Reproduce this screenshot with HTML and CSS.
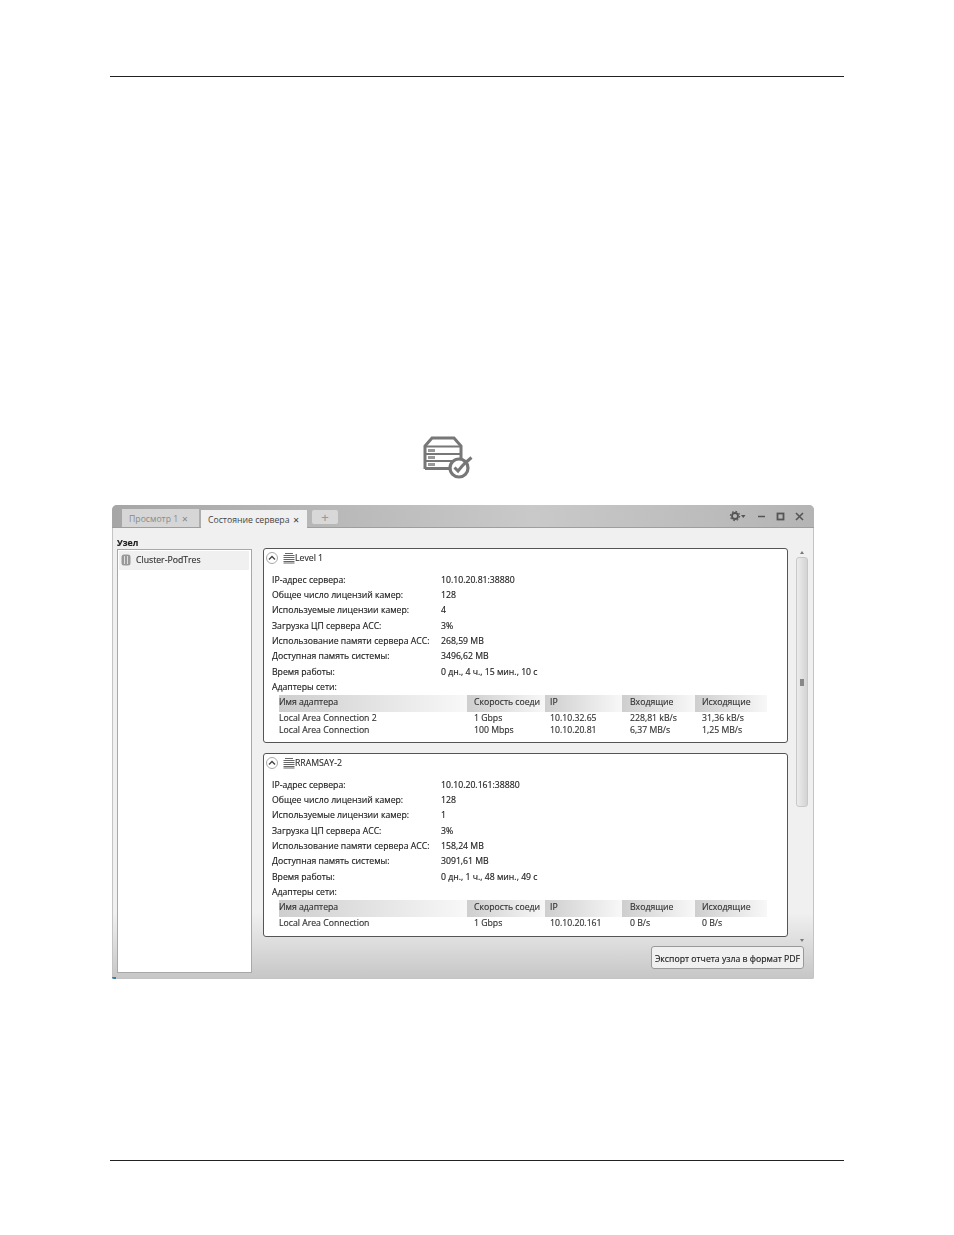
FILE: index.html
```html
<!DOCTYPE html>
<html lang="ru">
<head>
    <meta charset="UTF-8">
    <title>Состояние сервера</title>
    <link rel="stylesheet" href="styles.css">
</head>
<body>
<div class="page">
    <div class="rule"></div>

    <svg class="server-icon" width="52" height="44" viewBox="0 0 52 44">
        <path d="M2 34 V11 L9 3 H31 L38 11 V24" fill="none" stroke="#777" stroke-width="3" />
        <path d="M2 33.5 H26" stroke="#777" stroke-width="3" />
        <path d="M2 11.5 H38 M2 19 H38 M2 26 H30" stroke="#777" stroke-width="2.2" />
        <path d="M5 14h7v3H5zM5 21h7v3H5zM5 28h7v3H5z" fill="#999" />
        <circle cx="36" cy="33" r="9" fill="#fff" stroke="#777" stroke-width="3.2" />
        <path d="M31.5 32.5l3.5 3.5 5.5-6.5 M40.5 29.5l8-7" fill="none" stroke="#777" stroke-width="3" />
    </svg>

    <div class="window">
        <div class="titlebar">
            <div class="tab">Просмотр 1 <span class="tab-x">✕</span></div>
            <div class="tab tab-active">Состояние сервера <span class="tab-x">✕</span></div>
            <div class="tab-add">+</div>
            <div class="win-controls">
                <svg width="18" height="12" viewBox="0 0 18 12">
                    <circle cx="6" cy="6" r="3" fill="none" stroke="#555" stroke-width="1.8" />
                    <circle cx="6" cy="6" r="4.6" fill="none" stroke="#555" stroke-width="1.2" stroke-dasharray="1.6 2" />
                    <path d="M12 5h4.5l-2.2 3z" fill="#555" />
                </svg>
                <svg width="9" height="9" viewBox="0 0 9 9"><path d="M1 4.5h7" stroke="#555" stroke-width="1.6" /></svg>
                <svg width="9" height="9" viewBox="0 0 9 9"><rect x="1.5" y="1.5" width="6" height="6" fill="none" stroke="#555" stroke-width="1.8" /></svg>
                <svg width="9" height="9" viewBox="0 0 9 9"><path d="M1 1l7 7M8 1l-7 7" stroke="#555" stroke-width="1.6" /></svg>
            </div>
        </div>

        <div class="main">
            <div class="side">
                <div class="side-label">Узел</div>
                <div class="side-list">
                    <div class="side-item">
                        <svg width="10" height="12" viewBox="0 0 10 12">
                            <rect x="0.5" y="0.5" width="9" height="11" rx="2.5" fill="#999" />
                            <path d="M3.5 2v8M6.5 2v8" stroke="#ddd" />
                        </svg>
                        Cluster-PodTres
                    </div>
                </div>
            </div>

            <div class="content">
                <div class="content-top">
                    <div class="panels">
                        <div class="panel">
                            <div class="panel-head">
                                <span class="collapse"><svg width="8" height="6" viewBox="0 0 8 6"><path d="M1 4.5L4 1.5l3 3" fill="none" stroke="#444" stroke-width="1.4" /></svg></span>
                                <svg class="rack" width="12" height="12" viewBox="0 0 12 12"><path d="M2 1.5h8M.5 3.5h11M.5 5.5h11M.5 7.5h11M.5 9.5h11M.5 11h11" stroke="#666" /></svg>
                                <span>Level 1</span>
                            </div>
                            <div class="info">
                                <span>IP-адрес сервера:</span><span>10.10.20.81:38880</span>
                                <span>Общее число лицензий камер:</span><span>128</span>
                                <span>Используемые лицензии камер:</span><span>4</span>
                                <span>Загрузка ЦП сервера ACC:</span><span>3%</span>
                                <span>Использование памяти сервера ACC:</span><span>268,59 MB</span>
                                <span>Доступная память системы:</span><span>3496,62 MB</span>
                                <span>Время работы:</span><span>0 дн., 4 ч., 15 мин., 10 с</span>
                                <span>Адаптеры сети:</span><span></span>
                            </div>
                            <div class="net-table">
                                <div class="th">Имя адаптера</div><div class="th">Скорость соеди</div><div class="th">IP</div><div class="th">Входящие</div><div class="th">Исходящие</div>
                                <div class="td">Local Area Connection 2</div><div class="td">1 Gbps</div><div class="td">10.10.32.65</div><div class="td">228,81 kB/s</div><div class="td">31,36 kB/s</div>
                                <div class="td">Local Area Connection</div><div class="td">100 Mbps</div><div class="td">10.10.20.81</div><div class="td">6,37 MB/s</div><div class="td">1,25 MB/s</div>
                            </div>
                        </div>

                        <div class="panel">
                            <div class="panel-head">
                                <span class="collapse"><svg width="8" height="6" viewBox="0 0 8 6"><path d="M1 4.5L4 1.5l3 3" fill="none" stroke="#444" stroke-width="1.4" /></svg></span>
                                <svg class="rack" width="12" height="12" viewBox="0 0 12 12"><path d="M2 1.5h8M.5 3.5h11M.5 5.5h11M.5 7.5h11M.5 9.5h11M.5 11h11" stroke="#666" /></svg>
                                <span>RRAMSAY-2</span>
                            </div>
                            <div class="info">
                                <span>IP-адрес сервера:</span><span>10.10.20.161:38880</span>
                                <span>Общее число лицензий камер:</span><span>128</span>
                                <span>Используемые лицензии камер:</span><span>1</span>
                                <span>Загрузка ЦП сервера ACC:</span><span>3%</span>
                                <span>Использование памяти сервера ACC:</span><span>158,24 MB</span>
                                <span>Доступная память системы:</span><span>3091,61 MB</span>
                                <span>Время работы:</span><span>0 дн., 1 ч., 48 мин., 49 с</span>
                                <span>Адаптеры сети:</span><span></span>
                            </div>
                            <div class="net-table">
                                <div class="th">Имя адаптера</div><div class="th">Скорость соеди</div><div class="th">IP</div><div class="th">Входящие</div><div class="th">Исходящие</div>
                                <div class="td">Local Area Connection</div><div class="td">1 Gbps</div><div class="td">10.10.20.161</div><div class="td">0 B/s</div><div class="td">0 B/s</div>
                            </div>
                        </div>
                    </div>

                    <div class="scrollbar">
                        <div class="arrow-up"></div>
                        <div class="thumb"><div class="grip"></div></div>
                        <div class="arrow-down"></div>
                    </div>
                </div>

                <div class="actions">
                    <div class="btn">Экспорт отчета узла в формат PDF</div>
                </div>
            </div>
        </div>
        <div class="corner"></div>
    </div>

    <div class="rule rule-bottom"></div>
</div>
</body>
</html>
```

FILE: styles.css
```css
body {
    margin: 0;
    background: #fff;
    font-family: "Open Sans", "Liberation Sans", sans-serif;
    color: #222;
}
.page {
    padding: 76px 110px 0 110px;
    height: 1159px;
    display: flex;
    flex-direction: column;
    align-items: flex-start;
}
.rule {
    width: 734px;
    height: 1px;
    background: #222;
}
.rule-bottom {
    margin-top: 181px;
}
.server-icon {
    margin: 358px 0 0 313px;
    display: block;
}

/* window */
.window {
    position: relative;
    margin: 26px 0 0 2px;
    width: 702px;
    height: 474px;
    box-sizing: border-box;
    border-radius: 5px 5px 2px 2px;
    overflow: hidden;
    font-size: 8.7px;
    -webkit-text-stroke: 0.15px;
    display: flex;
    flex-direction: column;
    filter: blur(0.4px);
    background: linear-gradient(#f0f0f0 0%, #f0f0f0 86%, #c6c6c6 100%);
    box-shadow: inset 0 0 0 1px #c4c4c4;
}
.titlebar {
    height: 23px;
    flex: none;
    display: flex;
    align-items: flex-end;
    padding-left: 10px;
    background: linear-gradient(90deg, #a6a6a6, #c9c9c9 60%, #b4b4b4);
    border-bottom: 1px solid #9e9e9e;
    box-sizing: border-box;
}
.tab {
    width: 77px;
    height: 18px;
    line-height: 20px;
    box-sizing: border-box;
    padding-left: 7px;
    margin-right: 2px;
    color: #8a8a8a;
    background: #d6d6d6;
    white-space: nowrap;
    -webkit-text-stroke: 0;
}
.tab-active {
    width: 106px;
    color: #444;
    background: #f0f0f0;
    margin-bottom: -1px;
}
.tab-x {
    font-size: 8px;
    margin-left: 1px;
    font-family: "DejaVu Sans", sans-serif;
}
.tab-add {
    width: 26px;
    height: 14px;
    line-height: 14px;
    text-align: center;
    margin: 0 0 3px 3px;
    background: #d8d8d8;
    color: #999;
    font-size: 13px;
    border-radius: 2px;
}
.win-controls {
    margin-left: auto;
    padding-right: 10px;
    align-self: center;
    display: flex;
    align-items: center;
    gap: 10px;
    height: 23px;
}
.main {
    flex: 1;
    display: flex;
    padding: 0 5px 0 5px;
    min-height: 0;
}

/* left list */
.side {
    width: 135px;
    flex: none;
    display: flex;
    flex-direction: column;
}
.side-label {
    height: 21px;
    line-height: 31px;
    font-weight: 700;
    color: #222;
}
.side-list {
    height: 424px;
    box-sizing: border-box;
    background: #fff;
    border: 1px solid #a8a8a8;
    padding: 1px 2px 1px 1px;
}
.side-item {
    height: 19px;
    box-sizing: border-box;
    background: #f0f0f0;
    display: flex;
    align-items: center;
    gap: 5px;
    padding: 0 0 1px 2px;
    color: #333;
}

/* panels */
.content {
    margin-left: 11px;
    width: 541px;
    display: flex;
    flex-direction: column;
}
.content-top {
    display: flex;
    margin-top: 20px;
    height: 397px;
}
.panels {
    width: 525px;
    flex: none;
    height: 389px;
    display: flex;
    flex-direction: column;
    gap: 10px;
}
.panel {
    box-sizing: border-box;
    height: 195px;
    background: #fff;
    border: 1px solid #555;
    border-radius: 3px;
    padding: 3px 0 0 2px;
}
.panel + .panel {
    height: 184px;
}
.panel-head {
    height: 12px;
    display: flex;
    align-items: center;
    color: #333;
}
.collapse {
    width: 12px;
    height: 12px;
    box-sizing: border-box;
    border: 1px solid #aaa;
    border-radius: 50%;
    display: flex;
    align-items: center;
    justify-content: center;
    margin-right: 5px;
}
.info {
    display: grid;
    grid-template-columns: 169px 1fr;
    margin: 8.5px 0 -0.5px 6px;
    line-height: 15.35px;
    color: #222;
}
.net-table {
    display: grid;
    grid-template-columns: 188px 78px 77px 73px 72px;
    margin-left: 13px;
    width: 488px;
}
.th {
    height: 17px;
    line-height: 15px;
    padding-left: 7px;
    overflow: hidden;
    white-space: nowrap;
    box-sizing: border-box;
    background: linear-gradient(90deg, #cecece, #f8f8f8);
    color: #333;
}
.td {
    line-height: 12px;
    padding-left: 7px;
    white-space: nowrap;
    color: #333;
}
.th:nth-child(5n+1), .td:nth-child(5n+1) {
    padding-left: 0;
}
.th:nth-child(5n+3), .td:nth-child(5n+3) {
    padding-left: 5px;
}
.th:nth-child(5n+4), .td:nth-child(5n+4) {
    padding-left: 8px;
}

/* scrollbar */
.scrollbar {
    width: 12px;
    margin-left: 8px;
    height: 397px;
    display: flex;
    flex-direction: column;
    align-items: center;
}
.arrow-up, .arrow-down {
    width: 0;
    height: 0;
    border-left: 2px solid transparent;
    border-right: 2px solid transparent;
}
.arrow-up {
    border-bottom: 3px solid #777;
    margin: 3px 0 3px;
}
.arrow-down {
    border-top: 3px solid #777;
    margin-top: auto;
    margin-bottom: 3px;
}
.thumb {
    width: 12px;
    height: 250px;
    box-sizing: border-box;
    background: linear-gradient(90deg, #ececec, #d4d4d4);
    border: 1px solid #c8c8c8;
    border-radius: 3px;
    display: flex;
    align-items: center;
    justify-content: center;
}
.grip {
    width: 4px;
    height: 7px;
    background: #888;
}

.actions {
    display: flex;
    justify-content: flex-end;
    margin-top: 1px;
}
.btn {
    width: 153px;
    height: 23px;
    line-height: 24px;
    box-sizing: border-box;
    text-align: center;
    white-space: nowrap;
    background: #f0f0f0;
    border: 1px solid #999;
    border-radius: 3px;
    color: #222;
}
.corner {
    position: absolute;
    left: 0;
    bottom: 0;
    width: 4px;
    height: 2px;
    background: #2f7fb8;
}
```
